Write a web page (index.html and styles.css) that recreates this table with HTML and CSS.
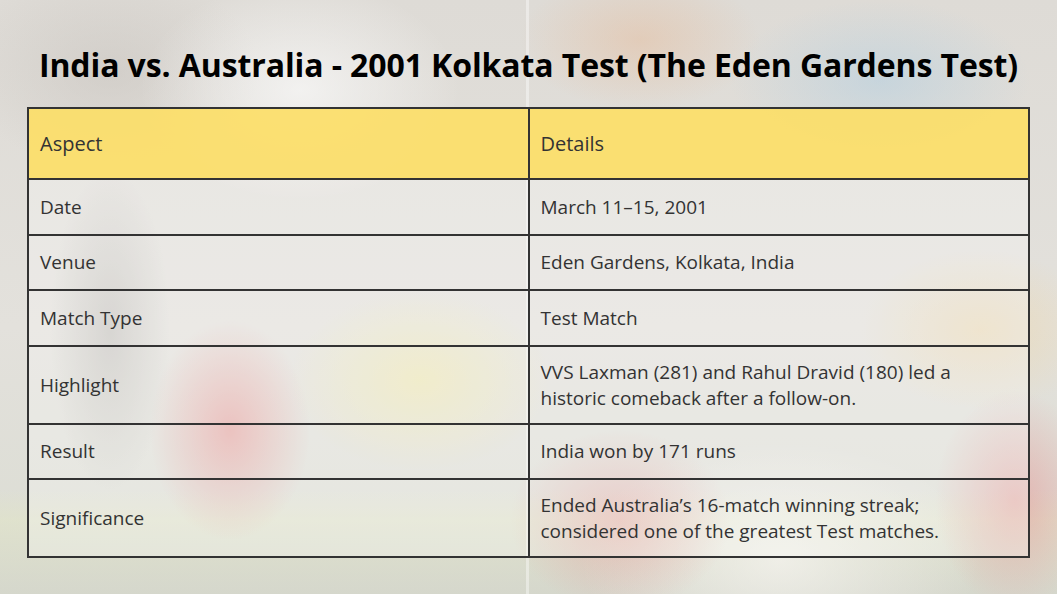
FILE: index.html
```html
<!DOCTYPE html>
<html lang="en">
<head>
<meta charset="utf-8">
<title>India vs. Australia - 2001 Kolkata Test</title>
<link rel="stylesheet" href="styles.css">
</head>
<body>
<main class="page">
  <h1 class="title">India vs. Australia - 2001 Kolkata Test (The Eden Gardens Test)</h1>
  <table class="info">
    <thead>
      <tr class="head"><th>Aspect</th><th>Details</th></tr>
    </thead>
    <tbody>
      <tr class="r1"><td>Date</td><td>March 11–15, 2001</td></tr>
      <tr class="r1"><td>Venue</td><td>Eden Gardens, Kolkata, India</td></tr>
      <tr class="r1"><td>Match Type</td><td>Test Match</td></tr>
      <tr class="r2"><td>Highlight</td><td>VVS Laxman (281) and Rahul Dravid (180) led a<br>historic comeback after a follow-on.</td></tr>
      <tr class="r1"><td>Result</td><td>India won by 171 runs</td></tr>
      <tr class="r2"><td>Significance</td><td>Ended Australia’s 16-match winning streak;<br>considered one of the greatest Test matches.</td></tr>
    </tbody>
  </table>
</main>
</body>
</html>
```

FILE: styles.css
```css
html, body {
  margin: 0;
  padding: 0;
}
body {
  width: 1057px;
  height: 594px;
  overflow: hidden;
  font-family: "Open Sans", "Noto Sans", sans-serif;
  color: #333;
  background:
    linear-gradient(90deg, transparent 0, transparent 526px, rgba(255,255,255,0.4) 526px, rgba(255,255,255,0.4) 529px, transparent 529px),
    radial-gradient(ellipse 80px 110px at 230px 430px, rgba(232,120,120,0.5), transparent 100%),
    radial-gradient(ellipse 130px 90px at 420px 380px, rgba(240,232,170,0.7), transparent 100%),
    radial-gradient(ellipse 110px 90px at 620px 520px, rgba(232,140,140,0.45), transparent 100%),
    radial-gradient(ellipse 80px 110px at 1015px 500px, rgba(232,140,140,0.5), transparent 100%),
    radial-gradient(ellipse 120px 80px at 980px 330px, rgba(240,210,150,0.45), transparent 100%),
    radial-gradient(ellipse 150px 80px at 880px 80px, rgba(175,205,225,0.5), transparent 100%),
    radial-gradient(ellipse 120px 70px at 640px 40px, rgba(230,185,150,0.45), transparent 100%),
    radial-gradient(ellipse 60px 160px at 110px 330px, rgba(175,172,168,0.5), transparent 100%),
    radial-gradient(ellipse 160px 110px at 300px 90px, rgba(250,250,250,0.7), transparent 100%),
    radial-gradient(ellipse 150px 100px at 110px 70px, rgba(200,195,190,0.55), transparent 100%),
    radial-gradient(ellipse 200px 120px at 780px 560px, rgba(250,248,245,0.65), transparent 100%),
    linear-gradient(180deg, transparent 0, transparent 490px, rgba(225,228,200,0.6) 520px, rgba(210,212,200,0.6) 594px),
    linear-gradient(180deg, #dedbd6 0%, #e3e1dc 55%, #dadcd2 100%);
}
.page {
  display: flex;
  flex-direction: column;
  align-items: center;
  padding-top: 43px;
}
.title {
  margin: 0 0 21px;
  font-size: 32px;
  line-height: 43px;
  font-weight: 700;
  color: #000;
  letter-spacing: -0.1px;
}
.info {
  width: 1003px;
  border-collapse: collapse;
  table-layout: fixed;
  font-size: 19px;
}
.info th, .info td {
  border: 2px solid #333;
  text-align: left;
  font-weight: 400;
  padding: 0 0 0 11px;
  vertical-align: middle;
  line-height: 26px;
}
.head th {
  height: 69px;
  background: rgba(252, 222, 104, 0.92);
  font-size: 20px;
  color: #333;
}
.r1 td {
  height: 53.5px;
  background: rgba(255, 255, 255, 0.28);
}
.r2 td {
  height: 76px;
  background: rgba(255, 255, 255, 0.28);
}
```
